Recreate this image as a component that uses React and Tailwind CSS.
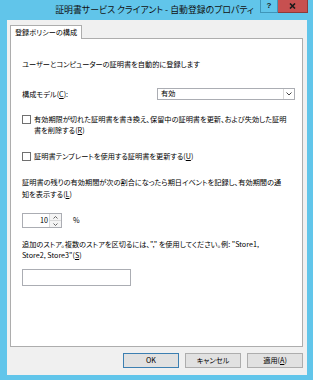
// App.jsx
const jp = "font-['Noto_Sans_CJK_JP','Noto_Sans',sans-serif] [font-feature-settings:'palt']";

function Checkbox({ children }) {
  return (
    <div className="flex items-start">
      <div className="w-[9px] h-[9px] mt-[1px] shrink-0 border border-[#707070] bg-white"></div>
      <p className="ml-[3px] leading-[11px] whitespace-nowrap">{children}</p>
    </div>
  );
}

function Button({ children, isDefault }) {
  return (
    <div
      className={
        "w-[56px] h-[15px] flex items-center justify-center bg-[#e1e1e1] border " +
        (isDefault ? "border-[#3c7fb1]" : "border-[#adadad]")
      }
    >
      {children}
    </div>
  );
}

export default function App() {
  return (
    <div className={`w-[313px] h-[380px] bg-[#61c5ea] flex flex-col text-black overflow-hidden ${jp}`}>
      {/* Title bar */}
      <div className="relative h-[20px] shrink-0 flex items-center justify-center">
        <span className="text-[8.9px] leading-none text-[#111] -translate-x-[2px]">
          証明書サービス クライアント - 自動登録のプロパティ
        </span>
        <div className="absolute top-0 right-[5px] flex">
          <div className="w-[18px] h-[13px] border border-t-0 border-[#3f95b8] flex items-center justify-center text-[8px] font-bold leading-none text-[#1a1a1a] font-['Liberation_Sans',sans-serif]">
            ?
          </div>
          <div className="w-[30px] h-[13px] bg-[#c75050] border border-t-0 border-l-0 border-[#8e3a3a] flex items-center justify-center">
            <svg width="7" height="6" viewBox="0 0 7 6">
              <path d="M1 0.5 L6 5.5 M6 0.5 L1 5.5" stroke="#1a1a1a" strokeWidth="1.6" />
            </svg>
          </div>
        </div>
      </div>

      {/* Client area */}
      <div className="flex-1 ml-[7px] mr-[6px] mb-[5px] bg-[#f0f0f0] flex flex-col pl-[3px] pr-[4px] pt-[5px] pb-[7px] text-[7.2px]">
        {/* Tab */}
        <div className="relative z-10 -mb-px w-[72px] h-[14px] bg-white border border-b-0 border-[#adadad] flex items-center justify-center leading-none">
          登録ポリシーの構成
        </div>

        {/* Panel */}
        <div className="flex-1 bg-white border border-[#adadad] pl-[11px] pr-[7px] pt-[20px] flex flex-col">
          <p className="leading-[11px] whitespace-nowrap">ユーザーとコンピューターの証明書を自動的に登録します</p>

          <div className="mt-[18px] flex items-center">
            <span className="w-[135px] leading-[11px]">
              構成モデル(<span className="underline">C</span>):
            </span>
            <div className="w-[138px] h-[12px] border border-[#abadb3] flex items-stretch">
              <div className="flex-1 flex items-center pl-[3px] leading-none">有効</div>
              <div className="w-[11px] border-l border-[#d9d9d9] flex items-center justify-center">
                <svg width="6" height="4" viewBox="0 0 6 4">
                  <path d="M0.5 0.5 L3 3 L5.5 0.5" stroke="#444" strokeWidth="1" fill="none" />
                </svg>
              </div>
            </div>
          </div>

          <div className="mt-[14px]">
            <Checkbox>
              有効期限が切れた証明書を書き換え、保留中の証明書を更新、および失効した証明
              <br />
              書を削除する(<span className="underline">R</span>)
            </Checkbox>
          </div>

          <div className="mt-[15px]">
            <Checkbox>
              証明書テンプレートを使用する証明書を更新する(<span className="underline">U</span>)
            </Checkbox>
          </div>

          <p className="mt-[14px] leading-[12px] whitespace-nowrap">
            証明書の残りの有効期間が次の割合になったら期日イベントを記録し、有効期間の通
            <br />
            知を表示する(<span className="underline">L</span>)
          </p>

          <div className="mt-[13px] flex items-center">
            <div className="w-[40px] h-[15px] border border-[#abadb3] flex">
              <div className="flex-1 flex items-center justify-end pr-[1px] leading-none">10</div>
              <div className="w-[12px] border-l border-[#d9d9d9] flex flex-col bg-[#f4f4f4]">
                <div className="flex-1 flex items-center justify-center border-b border-[#d9d9d9]">
                  <svg width="5" height="3" viewBox="0 0 5 3">
                    <path d="M0.5 2.5 L2.5 0.5 L4.5 2.5" stroke="#555" strokeWidth="0.9" fill="none" />
                  </svg>
                </div>
                <div className="flex-1 flex items-center justify-center">
                  <svg width="5" height="3" viewBox="0 0 5 3">
                    <path d="M0.5 0.5 L2.5 2.5 L4.5 0.5" stroke="#555" strokeWidth="0.9" fill="none" />
                  </svg>
                </div>
              </div>
            </div>
            <span className="ml-[11px] leading-none">%</span>
          </div>

          <p className="mt-[11px] leading-[11px] whitespace-nowrap">
            追加のストア。複数のストアを区切るには、"," を使用してください。例: "Store1,
            <br />
            Store2, Store3"(<span className="underline">S</span>)
          </p>

          <div className="mt-[8px] w-[109px] h-[17px] border border-[#abadb3] bg-white"></div>
        </div>

        {/* Buttons */}
        <div className="mt-[6px] flex justify-end gap-[6px]">
          <Button isDefault>OK</Button>
          <Button>キャンセル</Button>
          <Button>
            適用(<span className="underline">A</span>)
          </Button>
        </div>
      </div>
    </div>
  );
}
